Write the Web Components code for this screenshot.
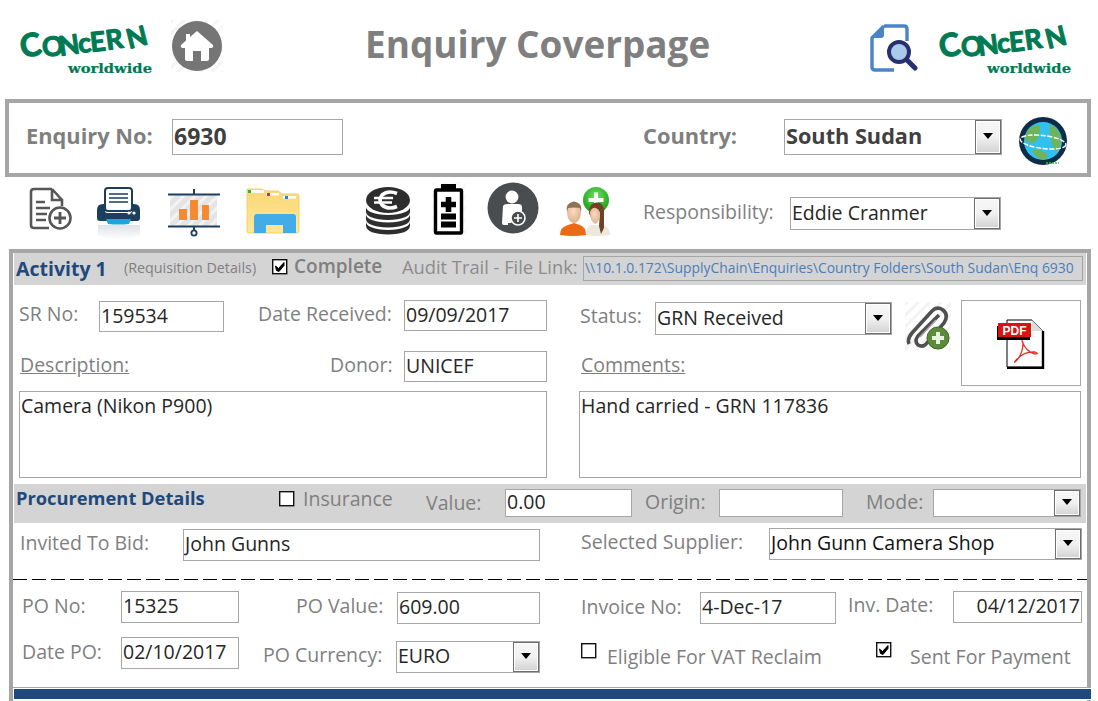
<!DOCTYPE html>
<html lang="en"><head><meta charset="utf-8"><title>Enquiry Coverpage</title>
<style>
html,body{margin:0;background:#fff}
body{font-family:"Open Sans","Noto Sans",sans-serif;width:1098px;height:701px;overflow:hidden}
</style></head><body>
<enquiry-page></enquiry-page>

<script>
const hatch=(id,c='#efefef',bg='#fff')=>`<defs><pattern id="${id}" width="8" height="8" patternUnits="userSpaceOnUse" patternTransform="rotate(45)"><rect width="8" height="8" fill="${bg}"/><rect width="3" height="8" fill="${c}"/></pattern></defs>`;
const ICONS={
home:[52,52,`${hatch('h1','#f5f5f5')}<rect width="52" height="52" fill="url(#h1)"/><circle cx="26" cy="26" r="25" fill="#757575"/><path d="M26 11 L42 25 Q43 27 41 28 L38 28 L38 39 Q38 41 36 41 L30 41 L30 31 L22 31 L22 41 L16 41 Q14 41 14 39 L14 28 L11 28 Q9 27 10 25 L15 20.5 L15 14 L19 14 L19 17 Z" fill="#fff"/>`],
docsearch:[48,48,`<path d="M14 2 H34 Q37 2 37 5 V17 M14 2 L2 14 V43 Q2 46 5 46 H24" fill="none" stroke="#4a84c6" stroke-width="3.4"/><path d="M14 2 L2 14 H11 Q14 14 14 11 Z" fill="#4a84c6"/><circle cx="29" cy="28" r="10" fill="#a9cbe9" stroke="#27306f" stroke-width="4"/><path d="M37 36 L45 44" stroke="#27306f" stroke-width="5" stroke-linecap="round"/>`],
globe:[48,48,`<circle cx="24" cy="24" r="24" fill="#0d2c4a"/><circle cx="24" cy="24" r="19" fill="#32c0ee"/><path d="M8 14 Q14 7 20 8 Q23 18 16 25 Q11 27 6 23 Z M31 7 Q40 11 42 22 Q42 30 38 35 Q33 30 32 22 Q30 15 31 7 Z M13 33 Q20 31 27 36 Q30 41 25 43 Q17 42 13 33 Z" fill="#6fb35a"/><ellipse cx="24" cy="25" rx="23" ry="6.5" transform="rotate(7 24 25)" fill="none" stroke="#fff" stroke-width="1.4" stroke-dasharray="5 1.5"/><path d="M27 46 H40" stroke="#21d23f" stroke-width="1.4" stroke-dasharray="2 1"/>`],
newdoc:[44,44,`<path d="M24 2 H6 Q3 2 3 5 V38 Q3 41 6 41 H21 M24 2 L34 13 V19 M24 2 V13 H34" fill="none" stroke="#565656" stroke-width="2.6"/><path d="M8 15 H17 M8 21 H22 M8 27 H19 M8 33 H18" stroke="#565656" stroke-width="2.4"/><circle cx="32" cy="31" r="10.5" fill="#fff" stroke="#565656" stroke-width="2.6"/><path d="M32 25 V37 M26 31 H38" stroke="#565656" stroke-width="2.8"/>`],
printer:[44,54,`<defs><linearGradient id="pr" x1="0" y1="0" x2="0" y2="1"><stop offset="0" stop-color="#dfe3e7"/><stop offset="1" stop-color="#fff"/></linearGradient></defs><path d="M1 38 H43 V48 Q30 53 22 53 Q12 53 1 48 Z" fill="url(#pr)"/><rect x="8" y="1" width="27" height="23" rx="3" fill="#fff" stroke="#1d3f5e" stroke-width="2"/><path d="M12 7 H31 M12 11 H31 M12 15 H31" stroke="#1d3f5e" stroke-width="1.7"/><path d="M6 17 H8 V24 Q8 26 10 26 H33 Q35 26 35 24 V17 H37 Q43 17 43 23 V31 Q43 34 40 34 H3 Q0 34 0 31 V23 Q0 17 6 17 Z" fill="#1d3f5e"/><circle cx="32" cy="26" r="1.6" fill="#fff"/><circle cx="37" cy="26" r="1.6" fill="#fff"/><path d="M9 32 H34 L32 37 Q22 38 11 37 Z" fill="#1ea5de"/>`],
slide:[54,50,`${hatch('h2','#f3f3f3','#e4e4e4')}<rect x="3" y="6" width="47" height="32" fill="url(#h2)"/><path d="M1 6.5 H53 M1 38.5 H53" stroke="#1d3f5e" stroke-width="2"/><path d="M27 1 V6 M27 39 V43" stroke="#1d3f5e" stroke-width="2"/><circle cx="27" cy="45" r="2.6" fill="none" stroke="#1d3f5e" stroke-width="1.8"/><rect x="12" y="21" width="8" height="11" fill="#f58a32"/><rect x="23" y="12" width="8" height="20" fill="#f58a32"/><rect x="35" y="17" width="7" height="15" fill="#f58a32"/>`],
folder:[56,50,`<defs><linearGradient id="fo" x1="0" y1="0" x2="0" y2="1"><stop offset="0" stop-color="#fbd876"/><stop offset="1" stop-color="#fee69b"/></linearGradient></defs><path d="M2 2 H17 L21 4 H33 L37 7 H52 Q54 7 54 9 V44 Q54 46 52 46 H4 Q2 46 2 44 Z" fill="url(#fo)" stroke="#f3cf6b"/><rect x="4" y="3" width="15" height="3" fill="#fff"/><rect x="21" y="6" width="13" height="2.5" fill="#fff"/><rect x="38" y="9" width="13" height="2.5" fill="#fff"/><rect x="3" y="3" width="3" height="3" fill="#1cbd2c"/><rect x="22" y="6" width="3" height="3" fill="#d3352a"/><rect x="40" y="9" width="3" height="3" fill="#2f7fd8"/><path d="M9 46 V30 Q9 27 12 27 H48 Q51 27 51 30 V46 H38 V38 H21 V46 Z" fill="#42ace9"/>`],
coins:[48,48,`<path d="M2 20 Q3 27 24 28 Q45 27 46 20 V25 Q45 32 24 33 Q3 32 2 25 Z M2 27.5 Q3 34.5 24 35.5 Q45 34.5 46 27.5 V32.5 Q45 39.5 24 40.5 Q3 39.5 2 32.5 Z M2 35 Q3 42 24 43 Q45 42 46 35 V39 Q45 47 24 47.5 Q3 47 2 39 Z" fill="#2d2d2d"/><ellipse cx="24" cy="13" rx="22" ry="13" fill="#2d2d2d"/><path d="M33 6.5 Q24 3 18 8 Q14 13 18 18 Q24 23 33 19.5" fill="none" stroke="#fff" stroke-width="3.6"/><path d="M10 11 H29 M10 15.5 H28" stroke="#fff" stroke-width="2.6"/>`],
battery:[34,52,`${hatch('h3','#f6f6f6')}<rect width="34" height="52" fill="url(#h3)"/><rect x="9" y="1" width="15" height="8" fill="#000"/><rect x="3.5" y="7" width="26" height="43" rx="1" fill="#fff" stroke="#000" stroke-width="3.4"/><path d="M16.5 14 V29 M9 21.5 H24" stroke="#000" stroke-width="5.6"/><rect x="9" y="30.5" width="15" height="6" fill="#000"/><rect x="9" y="38.5" width="15" height="6" fill="#000"/>`],
person:[52,52,`<circle cx="26" cy="26" r="25.5" fill="#4a4d4f"/><circle cx="25" cy="15" r="6.4" fill="#fff"/><path d="M16 24 Q17 22 20 22 H31 Q35 22 35 25 V29 L24 41 H21 V43 H17 Q15 43 15 41 Z" fill="#fff"/><circle cx="31" cy="36" r="7" fill="#4a4d4f" stroke="#fff" stroke-width="1.6"/><path d="M31 32 V40 M27 36 H35" stroke="#fff" stroke-width="1.6"/>`],
people:[54,52,`<defs><radialGradient id="gr" cx=".5" cy=".35" r=".7"><stop offset="0" stop-color="#6fe05c"/><stop offset="1" stop-color="#119a12"/></radialGradient><radialGradient id="sk" cx=".45" cy=".4" r=".7"><stop offset="0" stop-color="#f8dcc4"/><stop offset="1" stop-color="#dcaa84"/></radialGradient></defs><circle cx="38" cy="14" r="13" fill="url(#gr)"/><path d="M38 6.5 V21.5 M30.5 14 H45.5" stroke="#fff" stroke-width="4"/><path d="M2 49 Q2 41 10 39 L16 37 L22 39 Q28 41 28 49 Q15 51 2 49 Z" fill="#ec6a16"/><path d="M9 24 Q9 17 16 17 Q23 17 23 24 Q23 32 20 35 Q16 39 12 35 Q9 32 9 24 Z" fill="url(#sk)"/><path d="M9 26 Q7 17 16 15.5 Q25 17 23 26 L22 22 Q16 21 10 22 Z" fill="#8c7355"/><path d="M28 49 Q28 41 33 39 L46 39 Q52 42 52 49 Q40 51 28 49 Z" fill="#eee7dc"/><path d="M31 27 Q31 16 39 16.5 Q47 17 46 27 L46 42 L43 48 L41 40 L42 26 Q36 25 34 24 L34 34 Z" fill="#6d4326"/><path d="M32 26 Q34 21 38 22 Q42 24 42 28 Q41 37 37 38 Q32 35 32 26 Z" fill="url(#sk)"/>`],
clip:[46,48,`${hatch('h4','#f3f3f3')}<rect width="46" height="48" fill="url(#h4)"/><path d="M34 13 L13 34 Q9 39 13 43 Q18 46 22 41 L39 21 Q44 13 38 8 Q32 4 27 9 L7 31 Q2 37 4 42" fill="none" stroke="#505050" stroke-width="3.6"/><path d="M31 18 L15 35" stroke="#aaa" stroke-width="1.6"/><circle cx="33" cy="36" r="11" fill="#5c8a3b" stroke="#41692a"/><path d="M33 30 V42 M27 36 H39" stroke="#e7f3df" stroke-width="4"/>`],
pdf:[48,50,`<path d="M10 1 H35 L46 12 V48 H10 Z" fill="#fff" stroke="#000" stroke-width="1"/><path d="M46 12 V49 H10" fill="none" stroke="#000" stroke-width="2.4"/><path d="M35 1 L46 12 H35 Z" fill="#ddd"/><rect x="0" y="7" width="33" height="14" fill="#000"/><rect x="1" y="4" width="33" height="14" fill="#d8140f"/><text x="17.5" y="15.5" text-anchor="middle" font-family="Liberation Sans" font-weight="700" font-size="12" fill="#fff">PDF</text><path d="M25 22 Q29 33 38 35 Q43 35 38 33 Q28 32 20 40 Q15 46 20 41 Q26 34 26 24 Q25 21 25 22 Z" fill="none" stroke="#e4302a" stroke-width="1.3"/>`]
};
class XIcon extends HTMLElement{connectedCallback(){
 const [w,h,b]=ICONS[this.getAttribute('name')];
 this.attachShadow({mode:'open'}).innerHTML=`<style>:host{display:block;line-height:0}svg{display:block}</style><svg xmlns="http://www.w3.org/2000/svg" width="${w}" height="${h}" viewBox="0 0 ${w} ${h}">${b}</svg>`;
}}
class ConcernLogo extends HTMLElement{connectedCallback(){
 this.attachShadow({mode:'open'}).innerHTML=`<style>:host{display:block;line-height:0}svg{display:block;overflow:visible}text{font-family:"Lato","Open Sans",sans-serif;font-weight:700;fill:#007a53;stroke:#007a53;stroke-width:1.1;stroke-linejoin:round}.w{font-family:"DejaVu Serif",serif;font-weight:700;stroke-width:.2}</style><svg width="131" height="47" viewBox="0 0 131 47"><text x="0" y="31" rotate="-10" font-size="32">C</text><text x="21 38 57 69 85 107" y="30 29 26 25 23 22" rotate="-6 -8 -6 -6 -8 -14" font-size="27">ONcERN</text><text class="w" x="46" y="45.5" font-size="13.5" textLength="84" lengthAdjust="spacingAndGlyphs">worldwide</text></svg>`;
}}
class XLabel extends HTMLElement{constructor(){super();this.attachShadow({mode:'open'}).innerHTML=`<style>:host{display:block;font-size:19.5px;line-height:26px;color:#7f7f7f;white-space:nowrap;padding-left:var(--pl,0);margin-top:var(--mt,0);margin-left:-1px}</style><slot></slot>`}}
class XInput extends HTMLElement{constructor(){super();this.attachShadow({mode:'open'}).innerHTML=`<style>:host{display:block;box-sizing:border-box;border:1px solid #a6a6a6;background:#fff;height:var(--h,32px);margin-top:var(--mt,0);color:#262626;font-size:19.5px;line-height:calc(var(--h,32px) - 4px);padding:0 1px;white-space:nowrap;overflow:hidden}</style><slot></slot>`}}
class XCombo extends HTMLElement{constructor(){super();this.attachShadow({mode:'open'}).innerHTML=`<style>:host{display:flex;box-sizing:border-box;border:1px solid #a6a6a6;background:#fff;height:var(--h,32px);margin-top:var(--mt,0);color:#262626;font-size:19.5px;line-height:calc(var(--h,32px) - 4px)}
.t{flex:1;padding:0 1px;white-space:nowrap;overflow:hidden}.b{width:26px;box-sizing:border-box;border:1px solid #6e6e6e;box-shadow:inset 0 0 0 1px #fff;background:linear-gradient(#f7f7f7 0,#f1f1f1 50%,#d2d2d2 100%);display:flex;align-items:center;justify-content:center}.b i{display:block;width:0;height:0;border:5.5px solid transparent;border-top:6px solid #000;border-bottom:0;margin-top:-2px}</style><div class="t"><slot></slot></div><div class="b"><i></i></div>`}}
class XCheck extends HTMLElement{constructor(){super();this.attachShadow({mode:'open'}).innerHTML=`<style>:host{display:block;width:16px;height:16px;margin-top:var(--mt,0);line-height:0}</style><svg width="16" height="16" viewBox="0 0 16 16"></svg>`}
connectedCallback(){this.shadowRoot.querySelector('svg').innerHTML=`<rect x=".7" y=".7" width="14" height="14" fill="#fff" stroke="#111" stroke-width="1.4"/>`+(this.hasAttribute('checked')?`<path d="M3.5 7 L6.5 9.5 L12 3.5 L12 6.5 L7 12.5 L4.5 11.5 Z" fill="#000" stroke="#000"/>`:'')}}
class XRow extends HTMLElement{constructor(){super();this.attachShadow({mode:'open'}).innerHTML=`<style>:host{display:grid;grid-template-columns:var(--cols);grid-template-rows:var(--rows,auto);margin-top:var(--top,0);padding-left:var(--left,0);height:var(--height,auto);align-items:start;background:var(--bg,transparent);box-sizing:border-box}</style><slot></slot>`}}
class EnquiryPage extends HTMLElement{connectedCallback(){
 this.attachShadow({mode:'open'}).innerHTML=`<style>
:host{display:block;width:1098px;height:701px;overflow:hidden;font-family:"Open Sans","Noto Sans",sans-serif}
h1{margin:0;font-size:36.9px;font-weight:700;color:#7f7f7f;line-height:50px;margin-top:19px;white-space:nowrap}
.strong{font-weight:700;font-size:21.8px}
x-label.strong,.m0{margin-left:0}
.enq{box-sizing:border-box;height:78px;margin:0 7px 0 5px;border:4px solid #a6a6a6}
.panel{box-sizing:border-box;width:1082px;margin-left:9px;height:452px;border:solid #a6a6a6;border-width:4px 4px 0 4px}
.hd{color:#1f497d;font-weight:700;white-space:nowrap}
.u{text-decoration:underline}
.dash{height:1px;margin-top:18px;background:repeating-linear-gradient(90deg,#000 0 14px,transparent 14px 19px)}
.foot{height:12px;margin-right:-4px;border-top:1px solid #a6a6a6;background:#fff}
.foot::after{content:"";display:block;margin:1px 0 0 1px;height:10px;background:#1f497d}
.pdfbox{box-sizing:border-box;border:1px solid #a6a6a6;height:86px;grid-row:1 / span 2;grid-column:11;display:flex;justify-content:center;padding-top:18px}
.span2{grid-column:span 2}
</style>
<x-row style="--cols:130px 19px 52px 142px 344px 161px 48px 23px 131px;--left:22px;--height:99px">
 <concern-logo style="margin-top:27px"></concern-logo><span></span><x-icon name="home" style="margin-top:20px"></x-icon><span></span>
 <h1>Enquiry Coverpage</h1><span></span><x-icon name="docsearch" style="margin-top:24px"></x-icon><span></span><concern-logo style="margin-top:27px"></concern-logo>
</x-row>
<div class="enq">
 <x-row style="--cols:146px 171px 300px 141px 218px 17px 48px;--left:17px;--top:16px">
  <x-label class="strong" style="--mt:4px">Enquiry No:</x-label>
  <x-input class="strong" style="--h:36px;color:#404040;font-size:23px">6930</x-input><span></span>
  <x-label class="strong" style="--mt:4px">Country:</x-label>
  <x-combo class="strong" style="--h:36px;color:#404040;font-size:21.7px">South Sudan</x-combo><span></span>
  <x-icon name="globe" style="margin-top:-2px"></x-icon>
 </x-row>
</div>
<x-row style="--cols:45px 23px 47px 25px 56px 21px 58px 62px 48px 20px 34px 23px 52px 15px 54px 34px 146px 211px;--left:27px;--height:72px">
 <x-icon name="newdoc" style="margin-top:10px;margin-left:1px"></x-icon><span></span>
 <x-icon name="printer" style="margin-top:10px;margin-left:2px"></x-icon><span></span>
 <x-icon name="slide" style="margin-top:11px"></x-icon><span></span>
 <x-icon name="folder" style="margin-top:10px;margin-left:1px"></x-icon><span></span>
 <x-icon name="coins" style="margin-top:10px;margin-left:0"></x-icon><span></span>
 <x-icon name="battery" style="margin-top:6px"></x-icon><span></span>
 <x-icon name="person" style="margin-top:5px;margin-left:-2px"></x-icon><span></span>
 <x-icon name="people" style="margin-top:9px;margin-left:2px"></x-icon><span></span>
 <x-label style="--mt:22px">Responsibility:</x-label>
 <x-combo style="--h:33px;--mt:20px">Eddie Cranmer</x-combo>
</x-row>
<div class="panel">
 <x-row style="--cols:108px 148px 23px 107px 181px 500px;--left:2px;--height:32px;--bg:#d4d4d4;margin-left:1px;margin-right:1px">
  <span class="hd" style="font-size:19.5px;line-height:32px">Activity 1</span>
  <x-label class="m0" style="font-size:14.3px;--mt:2px">(Requisition Details)</x-label>
  <x-check checked style="--mt:6px"></x-check>
  <x-label style="font-weight:600;--mt:0;font-size:19px">Complete</x-label>
  <x-label class="m0" style="--mt:1px;font-size:18.3px;color:#8c8c8c">Audit Trail - File Link:</x-label>
  <x-input style="--h:25px;--mt:3px;background:#d4d4d4;color:#4a7ebb;font-size:13.9px">\\\\10.1.0.172\\SupplyChain\\Enquiries\\Country Folders\\South Sudan\\Enq 6930</x-input>
 </x-row>
 <x-row style="--cols:79px 125px 180px 143px 34px 74px 237px 13px 45px 11px 120px;--rows:51px 35px;--left:7px;--top:15px;--height:86px">
  <x-label style="--mt:1px">SR No:</x-label><x-input style="--h:31px;--mt:1px">159534</x-input>
  <x-label style="--mt:1px;--pl:35px">Date Received:</x-label><x-input style="--h:31px">09/09/2017</x-input><span></span>
  <x-label style="--mt:3px">Status:</x-label><x-combo style="--h:33px;--mt:2px">GRN Received</x-combo><span></span>
  <x-icon name="clip" style="margin-top:2px"></x-icon><span></span>
  <div class="pdfbox"><x-icon name="pdf"></x-icon></div>
  <x-label class="span2 m0" style="--mt:1px"><span class="u">Description:</span></x-label>
  <x-label style="--mt:1px;--pl:107px">Donor:</x-label><x-input style="--h:31px">UNICEF</x-input><span></span>
  <x-label class="m0" style="--mt:1px;grid-column:span 3"><span class="u">Comments:</span></x-label>
 </x-row>
 <x-row style="--cols:528px 32px 502px;--left:6px;--top:5px">
  <x-input style="--h:87px;line-height:28px;padding-left:1px">Camera (Nikon P900)</x-input><span></span>
  <x-input style="--h:87px;line-height:28px;padding-left:1px">Hand carried - GRN 117836</x-input>
 </x-row>
 <x-row style="--cols:263px 25px 123px 78px 127px 87px 124px 90px 148px;--left:2px;--top:6px;--height:39px;--bg:#d4d4d4;margin-left:1px;margin-right:1px">
  <span class="hd" style="font-size:18.3px;line-height:28px">Procurement Details</span>
  <x-check style="--mt:7px"></x-check>
  <x-label style="--mt:2px">Insurance</x-label>
  <x-label style="--mt:6px">Value:</x-label>
  <x-input style="--h:28px;--mt:5px">0.00</x-input>
  <x-label style="--pl:14px;--mt:5px">Origin:</x-label>
  <x-input style="--h:28px;--mt:5px"></x-input>
  <x-label style="--pl:24px;--mt:5px">Mode:</x-label>
  <x-combo style="--h:28px;--mt:5px"></x-combo>
 </x-row>
 <x-row style="--cols:162px 357px 42px 187px 313px;--left:8px;--top:6px;--height:32px">
  <x-label style="--mt:1px">Invited To Bid:</x-label><x-input>John Gunns</x-input><span></span>
  <x-label>Selected Supplier:</x-label><x-combo style="--mt:-1px;color:#111">John Gunn Camera Shop</x-combo>
 </x-row>
 <div class="dash"></div>
 <x-row style="--cols:98px 118px 158px 143px 42px 118px 136px 117px 129px;--rows:46px 50px;--left:10px;--top:11px;--height:96px">
  <x-label style="--mt:2px">PO No:</x-label><x-input>15325</x-input>
  <x-label style="--mt:2px;--pl:58px">PO Value:</x-label><x-input style="--mt:1px">609.00</x-input><span></span>
  <x-label style="--mt:3px">Invoice No:</x-label><x-input style="--mt:1px">4-Dec-17</x-input>
  <x-label style="--mt:1px;--pl:13px">Inv. Date:</x-label><x-input style="text-align:right">04/12/2017</x-input>
  <x-label style="--mt:2px">Date PO:</x-label><x-input>02/10/2017</x-input>
  <x-label style="--mt:5px;--pl:25px">PO Currency:</x-label><x-combo style="--mt:4px;margin-left:-1px">EURO</x-combo><span></span>
  <x-row style="--cols:27px 268px 35px 170px;--left:0;--top:0;--rows:auto;--height:auto;grid-column:span 4;margin-left:-1px">
   <x-check style="--mt:6px"></x-check><x-label style="--mt:7px">Eligible For VAT Reclaim</x-label>
   <x-check checked style="--mt:5px"></x-check><x-label style="--mt:7px">Sent For Payment</x-label>
  </x-row>
 </x-row>
 <div class="foot"></div>
</div>`;
}}
customElements.define('x-icon',XIcon);customElements.define('concern-logo',ConcernLogo);customElements.define('x-label',XLabel);customElements.define('x-input',XInput);customElements.define('x-combo',XCombo);customElements.define('x-check',XCheck);customElements.define('x-row',XRow);customElements.define('enquiry-page',EnquiryPage);
</script>
</body></html>
